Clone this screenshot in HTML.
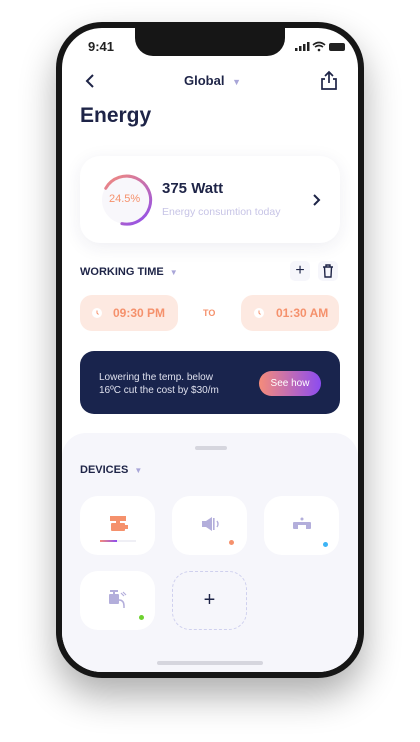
<!DOCTYPE html>
<html><head><style>
*{margin:0;padding:0;box-sizing:border-box}
body{width:420px;height:742px;background:#fff;font-family:"Liberation Sans",sans-serif;position:relative;overflow:hidden}
.phone{position:absolute;left:56px;top:22px;width:308px;height:656px;background:#161616;border-radius:46px;box-shadow:0 18px 36px rgba(0,0,0,.32)}
.screen{position:absolute;left:62px;top:28px;width:296px;height:644px;background:#fff;border-radius:40px;overflow:hidden}
.notch{position:absolute;left:73px;top:-2px;width:150px;height:30px;background:#161616;border-radius:0 0 18px 18px}
.a{position:absolute}
.navy{color:#1e2447}
.bottom{position:absolute;left:0;top:405px;width:296px;height:260px;background:#f6f6fb;border-radius:24px 24px 0 0}
.dev{position:absolute;width:75px;height:59px;background:#fff;border-radius:18px}
</style></head><body>
<div class="phone"></div>
<div class="screen">
<div class="notch"></div>
<div class="a" style="left:26px;top:11px;font-size:13px;font-weight:bold;color:#222">9:41</div>
<svg class="a" style="left:233px;top:13px" width="52" height="11"><rect x="0" y="7" width="2.5" height="3" fill="#222"/><rect x="4" y="5" width="2.5" height="5" fill="#222"/><rect x="8" y="3" width="2.5" height="7" fill="#222"/><rect x="12" y="1" width="2.5" height="9" fill="#222"/><path d="M18 4 Q24 -1 30 4 M20 6 Q24 3 28 6" stroke="#222" stroke-width="1.6" fill="none"/><circle cx="24" cy="9" r="1.3" fill="#222"/><rect x="34" y="2" width="16" height="8" rx="2" fill="#222"/></svg>
<svg class="a" style="left:22px;top:45px" width="12" height="16"><path d="M9 2 L3 8 L9 14" stroke="#1e2447" stroke-width="2" fill="none"/></svg>
<div class="a navy" style="left:122px;top:45px;font-size:13px;font-weight:bold">Global <span style="color:#a9a6d8;font-size:9px;margin-left:4px">▼</span></div>
<svg class="a" style="left:258px;top:42px" width="18" height="20"><path d="M9 13 V2 M5 6 L9 2 L13 6 M5 9 H2 V19 H16 V9 H13" stroke="#1e2447" stroke-width="1.7" fill="none"/></svg>
<div class="a navy" style="left:18px;top:76px;font-size:21px;font-weight:bold">Energy</div>
<div class="a" style="left:18px;top:128px;width:260px;height:87px;background:#fff;border-radius:20px;box-shadow:0 4px 18px rgba(40,40,90,.08)"></div>
<svg class="a" style="left:36px;top:144px" width="56" height="56"><circle cx="28" cy="28" r="24" fill="#f8f7fb"/><defs><linearGradient id="g" x1="0" y1="0" x2="1" y2="1"><stop offset="0" stop-color="#f58c7a"/><stop offset="1" stop-color="#8c4cf0"/></linearGradient></defs><path d="M6 20 A24 24 0 1 1 28 52" stroke="url(#g)" stroke-width="3" fill="none" stroke-linecap="round" transform="rotate(10 28 28)"/></svg>
<div class="a" style="left:47px;top:165px;font-size:11px;color:#f5916c">24.5%</div>
<div class="a navy" style="left:100px;top:152px;font-size:15px;font-weight:bold">375 Watt</div>
<div class="a" style="left:100px;top:178px;font-size:10.5px;color:#c7c4e6">Energy consumtion today</div>
<svg class="a" style="left:250px;top:165px" width="10" height="14"><path d="M2 2 L7 7 L2 12" stroke="#1e2447" stroke-width="2" fill="none"/></svg>
<div class="a navy" style="left:18px;top:238px;font-size:11px;font-weight:bold">WORKING TIME <span style="color:#a9a6d8;font-size:8px;margin-left:3px">▼</span></div>
<div class="a" style="left:228px;top:233px;width:20px;height:20px;background:#f6f6fb;border-radius:5px;text-align:center;font-size:16px;line-height:20px;color:#1e2447">+</div>
<div class="a" style="left:256px;top:233px;width:20px;height:20px;background:#f6f6fb;border-radius:5px"></div>
<svg class="a" style="left:260px;top:236px" width="12" height="14"><path d="M1 3 H11 M4 3 V1 H8 V3 M2.5 3 L3 13 H9 L9.5 3" stroke="#1e2447" stroke-width="1.4" fill="none"/></svg>
<div class="a" style="left:18px;top:267px;width:98px;height:36px;background:#fde9e1;border-radius:12px"></div>
<div class="a" style="left:179px;top:267px;width:98px;height:36px;background:#fde9e1;border-radius:12px"></div>
<svg class="a" style="left:30px;top:280px" width="10" height="10"><circle cx="5" cy="5" r="5" fill="#fff"/><path d="M5 2.5 V5 L6.5 6.5" stroke="#f5916c" stroke-width="1" fill="none"/></svg>
<svg class="a" style="left:192px;top:280px" width="10" height="10"><circle cx="5" cy="5" r="5" fill="#fff"/><path d="M5 2.5 V5 L6.5 6.5" stroke="#f5916c" stroke-width="1" fill="none"/></svg>
<div class="a" style="left:51px;top:278px;font-size:12px;font-weight:bold;color:#f5916c">09:30 PM</div>
<div class="a" style="left:141px;top:280px;font-size:9px;font-weight:bold;color:#f5916c">TO</div>
<div class="a" style="left:214px;top:278px;font-size:12px;font-weight:bold;color:#f5916c">01:30 AM</div>
<div class="a" style="left:18px;top:323px;width:260px;height:63px;background:#19244d;border-radius:14px"></div>
<div class="a" style="left:37px;top:343px;font-size:10px;line-height:13px;color:#dfe1ee">Lowering the temp. below<br>16ºC cut the cost by $30/m</div>
<div class="a" style="left:197px;top:343px;width:62px;height:25px;border-radius:13px;background:linear-gradient(90deg,#f58c7a,#8c4cf0);color:#fff;font-size:10px;text-align:center;line-height:25px">See how</div>
<div class="bottom"></div>
<div class="a" style="left:133px;top:418px;width:32px;height:4px;background:#d6d6de;border-radius:2px"></div>
<div class="a navy" style="left:18px;top:436px;font-size:11px;font-weight:bold">DEVICES <span style="color:#a9a6d8;font-size:8px;margin-left:3px">▼</span></div>
<div class="dev" style="left:18px;top:468px"></div>
<div class="dev" style="left:110px;top:468px"></div>
<div class="dev" style="left:202px;top:468px"></div>
<div class="dev" style="left:18px;top:543px"></div>
<div class="a" style="left:110px;top:543px;width:75px;height:59px;border:1px dashed #cfd0ee;border-radius:18px;text-align:center;line-height:57px;font-size:20px;color:#1e2447">+</div>
<svg class="a" style="left:46px;top:486px" width="22" height="20"><rect x="2" y="2" width="16" height="5" fill="#f5916c"/><rect x="8" y="6" width="4" height="4" fill="#f5916c"/><rect x="3" y="9" width="14" height="8" rx="1" fill="#f5916c"/><rect x="17" y="11" width="3" height="4" fill="#f5916c"/></svg>
<div class="a" style="left:38px;top:512px;width:36px;height:2px;background:#efeff5"></div>
<div class="a" style="left:38px;top:512px;width:17px;height:2px;background:linear-gradient(90deg,#f58c7a,#8c4cf0)"></div>
<svg class="a" style="left:138px;top:487px" width="22" height="18"><path d="M2 6 H6 L12 2 V16 L6 12 H2 Z" fill="#b3aedb"/><rect x="13" y="3" width="1.6" height="12" fill="#b3aedb"/><path d="M17 6 Q19 9 17 12" stroke="#b3aedb" stroke-width="1.4" fill="none"/></svg>
<div class="a" style="left:167px;top:512px;width:5px;height:5px;border-radius:50%;background:#f5916c"></div>
<svg class="a" style="left:230px;top:488px" width="20" height="16"><rect x="1" y="6" width="18" height="7" rx="1" fill="#b3aedb"/><rect x="6" y="9" width="8" height="4" fill="#fff"/><circle cx="10" cy="3" r="1.5" fill="#b3aedb"/></svg>
<div class="a" style="left:261px;top:514px;width:5px;height:5px;border-radius:50%;background:#3db4f5"></div>
<svg class="a" style="left:45px;top:560px" width="24" height="26"><rect x="3" y="2" width="8" height="2" fill="#b3aedb"/><rect x="6" y="3" width="2" height="4" fill="#b3aedb"/><rect x="2" y="6" width="10" height="10" rx="1" fill="#b3aedb"/><path d="M12 12 Q17 12 17 18 V20" stroke="#b3aedb" stroke-width="1.5" fill="none"/><path d="M14 5 L17 8 M16 4 L19 7" stroke="#b3aedb" stroke-width="1.2"/></svg>
<div class="a" style="left:77px;top:587px;width:5px;height:5px;border-radius:50%;background:#6dd12f"></div>
<div class="a" style="left:95px;top:633px;width:106px;height:4px;background:#d6d6de;border-radius:2px"></div>
</div>
</body></html>
